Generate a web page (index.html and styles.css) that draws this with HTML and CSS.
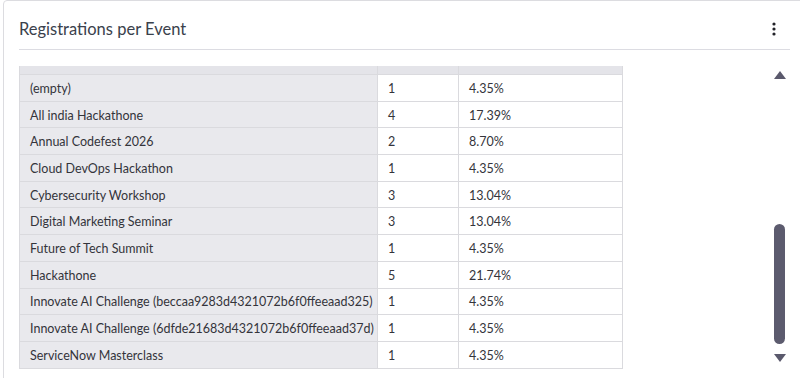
FILE: index.html
```html
<!DOCTYPE html>
<html lang="en">
<head>
<meta charset="utf-8">
<title>Registrations per Event</title>
<link rel="stylesheet" href="styles.css">
</head>
<body>
<div class="card">
  <div class="head">
    <h2 class="title">Registrations per Event</h2>
    <button class="menu" aria-label="More options">
      <svg width="4" height="14" viewBox="0 0 4 14"><circle cx="2" cy="2" r="1.6"/><circle cx="2" cy="7" r="1.6"/><circle cx="2" cy="12" r="1.6"/></svg>
    </button>
  </div>
  <div class="body">
    <div class="viewport">
      <table class="grid">
        <thead>
          <tr><th class="c1" aria-label="Event"></th><th class="c2" aria-label="Registrations"></th><th class="c3" aria-label="Percentage"></th></tr>
        </thead>
        <tbody>
          <tr><th class="c1">(empty)</th><td>1</td><td>4.35%</td></tr>
          <tr><th class="c1">All india Hackathone</th><td>4</td><td>17.39%</td></tr>
          <tr><th class="c1">Annual Codefest 2026</th><td>2</td><td>8.70%</td></tr>
          <tr><th class="c1">Cloud DevOps Hackathon</th><td>1</td><td>4.35%</td></tr>
          <tr><th class="c1">Cybersecurity Workshop</th><td>3</td><td>13.04%</td></tr>
          <tr><th class="c1">Digital Marketing Seminar</th><td>3</td><td>13.04%</td></tr>
          <tr><th class="c1">Future of Tech Summit</th><td>1</td><td>4.35%</td></tr>
          <tr><th class="c1">Hackathone</th><td>5</td><td>21.74%</td></tr>
          <tr><th class="c1">Innovate AI Challenge (beccaa9283d4321072b6f0ffeeaad325)</th><td>1</td><td>4.35%</td></tr>
          <tr><th class="c1">Innovate AI Challenge (6dfde21683d4321072b6f0ffeeaad37d)</th><td>1</td><td>4.35%</td></tr>
          <tr><th class="c1">ServiceNow Masterclass</th><td>1</td><td>4.35%</td></tr>
        </tbody>
      </table>
    </div>
    <div class="scrollbar" aria-hidden="true">
      <span class="arrow up"></span>
      <span class="track"></span>
      <span class="thumb"></span>
      <span class="arrow down"></span>
    </div>
  </div>
</div>
</body>
</html>
```
FILE: styles.css
```css
html, body {
  margin: 0;
  padding: 0;
  background: #ffffff;
  overflow: hidden;
}
body {
  width: 800px;
  height: 378px;
  font-family: Lato, "Noto Sans", sans-serif;
  color: #2e2e35;
}
.card {
  margin-left: 3px;
  width: 803px;
  height: 390px;
  box-sizing: border-box;
  border: 1px solid #dcdce0;
  border-radius: 4px;
  background: #fff;
  padding: 0 15px;
}
.head {
  height: 49px;
  box-sizing: border-box;
  padding-top: 8px;
  display: flex;
  align-items: center;
  justify-content: space-between;
  border-bottom: 1px solid #dcdce2;
}
.title {
  margin: 0;
  font-size: 16.5px;
  font-weight: 400;
  color: #3a414c;
  line-height: 20px;
}
.menu {
  border: 0;
  background: none;
  padding: 0;
  margin-right: 13px;
  width: 6px;
  height: 16px;
  display: flex;
  align-items: center;
  justify-content: center;
  fill: #222228;
}
.body {
  margin-top: 16px;
  height: 305px;
  display: flex;
}
.viewport {
  flex: 1;
  overflow: hidden;
}
.grid {
  margin-top: -19px;
  border-collapse: collapse;
  font-size: 12.5px;
  color: #34343b;
  table-layout: fixed;
  width: 601px;
}
.grid th, .grid td {
  border: 1px solid #dadade;
  padding: 2px 10px 0;
  text-align: left;
  font-weight: 400;
  white-space: nowrap;
  overflow: hidden;
  line-height: 16px;
}
.grid tr {
  height: 26.7px;
}
.grid thead tr {
  height: 27px;
}
.grid thead th {
  background: #e4e4e9;
}
.grid .c1 {
  width: 337px;
}
.grid .c2 {
  width: 60px;
}
.grid .c3 {
  width: 143px;
}
.grid tbody th {
  background: #e9e9ed;
}
.grid td {
  background: #ffffff;
}
.scrollbar {
  width: 13px;
  margin-right: 4px;
  margin-left: 8px;
  display: flex;
  flex-direction: column;
  align-items: center;
  padding-bottom: 9px;
  box-sizing: border-box;
}
.arrow {
  width: 0;
  height: 0;
  border-left: 6px solid transparent;
  border-right: 6px solid transparent;
}
.arrow.up {
  margin-top: 5px;
  border-bottom: 8px solid #5a596c;
}
.arrow.down {
  border-top: 8px solid #5a596c;
}
.track {
  flex: 1;
}
.thumb {
  width: 11px;
  height: 120px;
  border-radius: 6px;
  background: #5c5b6e;
  margin-bottom: 10px;
}
```
